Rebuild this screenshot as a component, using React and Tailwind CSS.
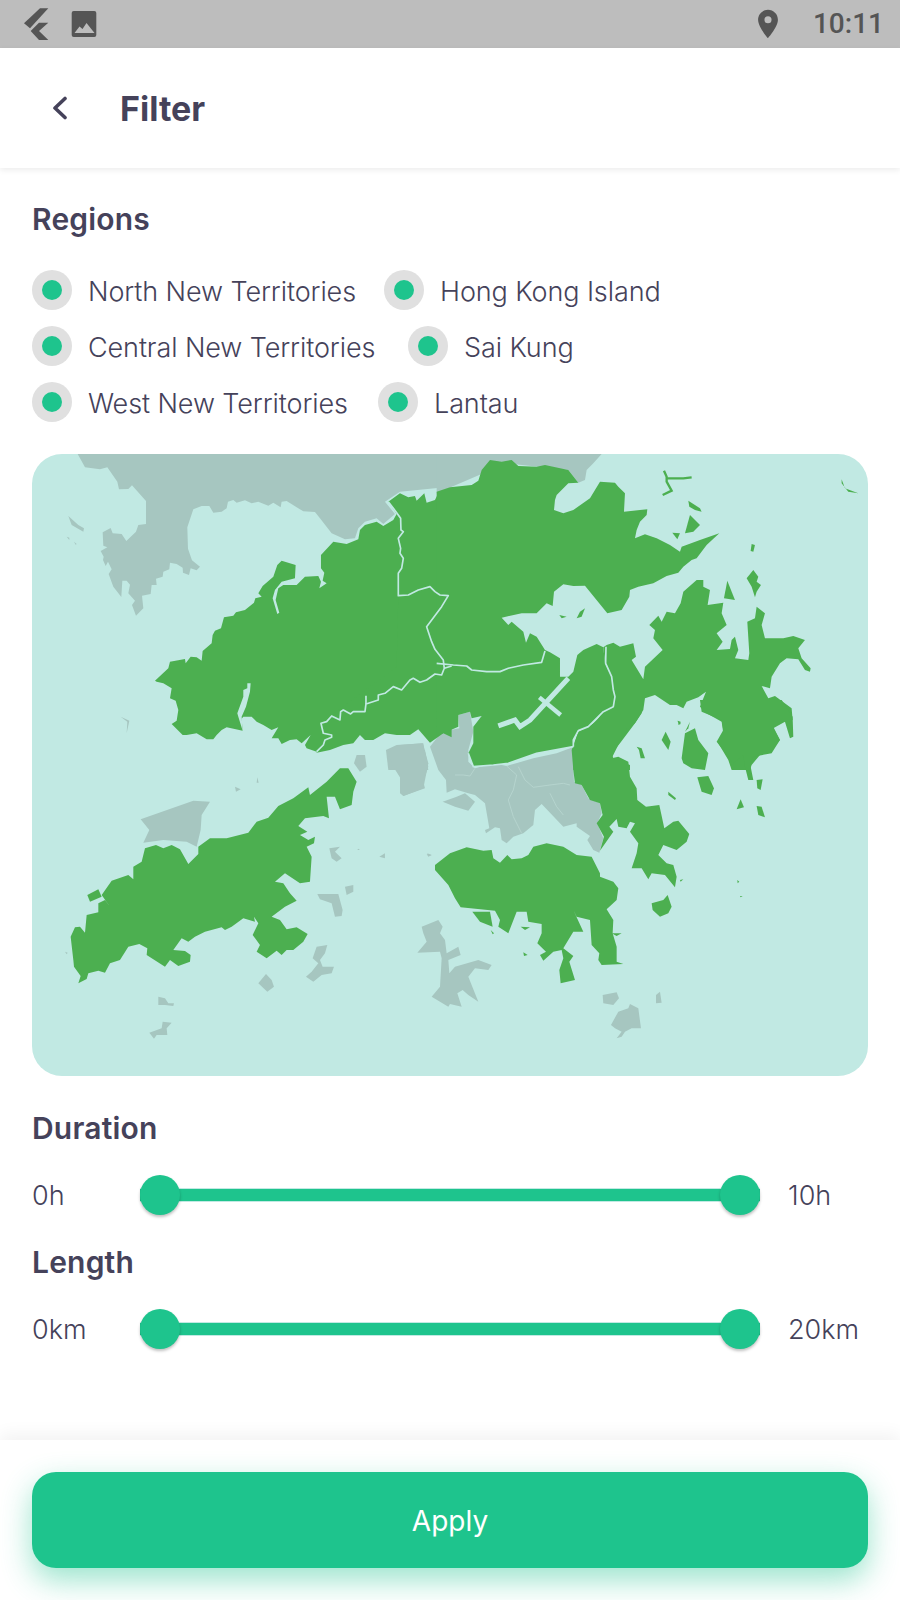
import { MdLocationOn } from 'react-icons/md';

const GREEN = '#4caf50';
const GREY = '#a6c6c0';
const SEA = '#c1e9e3';

// traced map pieces, each set in the pixel grid of the crop it was read from
const crops = [
  {
    at: 'translate(30 450) scale(0.3333)',
    grey: [
      '143,12 165,52 210,58 232,52 262,95 267,118 295,117 306,106 348,153 348,222 325,225 318,245 289,273 275,252 248,250 242,234 218,247 220,287 232,292 212,303 221,320 219,330 227,348 234,335 245,358 236,372 250,410 274,441 277,392 290,392 300,404 295,430 315,452 306,465 318,497 340,475 336,437 362,432 365,405 380,405 378,386 398,380 400,365 418,358 420,338 440,342 458,353 459,368 477,375 482,355 500,361 510,350 486,331 474,296 472,232 490,178 515,168 538,168 550,188 575,185 590,175 594,155 610,150 620,158 645,151 665,160 685,155 715,167 730,158 752,172 755,155 770,153 800,172 820,184 855,186 870,205 905,250 945,268 975,265 985,235 1005,215 1040,205 1060,222 1095,192 1065,155 1110,125 1260,110 1260,12',
      '115,198 145,225 162,235 160,245 125,225',
      '110,260 118,263 118,270',
      '132,275 140,282 137,284',
      '272,800 298,812 290,850 292,815',
      '1068,900 1100,885 1180,880 1195,960 1075,960',
    ],
    green: [
      '375,692 415,655 420,635 465,627 467,640 482,620 500,622 515,632 518,603 545,580 548,555 555,542 573,535 582,502 610,497 618,487 645,480 672,458 676,445 695,440 685,430 698,408 730,380 742,345 755,332 797,345 795,385 755,395 735,420 728,445 742,492 748,488 737,450 745,415 760,405 800,405 825,380 865,378 873,395 868,415 890,400 878,392 883,368 873,355 873,315 910,275 950,282 985,268 990,240 1005,225 1040,215 1060,228 1090,210 1100,192 1112,205 1113,240 1120,245 1105,265 1112,295 1110,310 1120,325 1115,355 1105,370 1105,437 1135,435 1165,420 1200,410 1215,425 1230,435 1255,437 1235,470 1190,530 1205,575 1215,598 1240,630 1243,655 1235,670 1215,672 1190,690 1170,697 1150,685 1140,690 1115,720 1090,710 1065,730 1045,735 1045,750 1012,760 1005,785 970,785 962,792 940,780 932,785 930,810 905,798 890,815 873,820 880,850 905,855 905,862 885,870 880,885 860,905 830,895 825,885 842,855 815,880 800,868 780,870 755,882 745,865 725,865 745,832 725,840 700,825 680,815 665,800 640,800 635,806 638,842 590,832 575,840 560,855 550,868 530,868 500,850 470,855 458,855 425,822 440,812 445,780 437,752 420,745 425,715 400,700 380,695',
      '1075,155 1110,130 1135,142 1155,138 1160,152 1183,130 1190,158 1215,150 1225,130 1245,120 1265,118 1265,862 1240,850 1200,878 1165,838 1140,855 1100,855 1065,850 1030,870 1005,870 990,855 970,880 940,885 900,900 860,908 860,905 880,885 885,870 905,862 905,855 880,850 873,820 1100,650 1105,437 1105,370 1115,355 1120,325 1110,310 1112,295 1105,265 1120,245 1113,240 1112,205 1100,192',
    ],
    sea: ['652,700 662,700 660,725 648,770 635,800 638,842 625,800 622,790 640,740 640,720 652,715'],
    lines: [
      '1075,155 1098,185 1112,205 1113,240 1120,245 1105,265 1112,295 1110,310 1120,325 1115,355 1105,370 1105,437 1135,435 1165,420 1200,410 1215,425 1230,435 1255,437 1235,470 1190,530 1205,575 1215,598 1240,630 1243,655 1235,675 1215,672 1190,690 1170,697 1150,685 1140,690 1115,720 1090,710 1065,730 1045,735 1045,750 1008,762 1005,785 970,785 962,792 940,780 932,785 930,810 905,798 890,815 873,820 880,850 905,855 905,862 885,870 880,885 860,905',
      '1008,737 1008,762',
      '1243,655 1265,648',
    ],
  },
  {
    at: 'translate(30 750) scale(0.3333)',
    grey: [
      '1070,0 1185,0 1195,50 1180,95 1185,115 1120,138 1110,120 1115,90 1090,50',
      '980,15 1005,15 1010,50 990,65 972,40',
      '332,208 490,152 540,155 515,195 512,240 500,290 470,275 400,270 340,278 358,240',
      '615,110 632,118 618,125',
      '682,82 686,98 680,98',
      '898,295 930,290 915,305 925,315 935,325 920,335 905,325',
      '985,296 990,300 982,300',
      '1048,320 1065,310 1065,325',
      '1192,310 1205,315 1195,318',
      '862,432 925,432 938,480 935,498 915,500 905,460 870,448',
      '945,410 970,405 970,425 950,435',
      '860,590 892,585 885,610 870,630 878,650 912,650 905,670 875,675 850,695 828,680 845,665 865,640 848,625',
      '685,700 708,672 725,690 732,710 712,725',
      '385,740 405,745 415,760 432,760 430,768 405,765 385,765',
      '358,848 395,835 398,815 425,818 410,835 412,855 380,855 372,866',
      '105,605 113,608 110,613',
    ],
    green: [
      '930,55 955,55 980,95 970,125 965,165 930,178 915,140 890,140 897,205 880,198 825,205 805,228 832,245 810,255 835,270 855,260 852,280 830,290 845,320 840,395 810,400 765,370 735,395 760,400 780,430 800,452 765,470 725,500 750,510 770,538 800,532 833,552 820,575 790,600 770,600 755,615 740,602 710,625 680,605 690,585 668,555 685,520 672,500 675,515 640,505 605,530 585,540 575,532 525,545 495,560 475,575 455,565 430,600 465,603 482,615 480,635 445,648 420,630 405,650 350,615 352,595 328,582 295,590 270,630 240,640 225,668 205,662 175,670 170,687 145,700 152,678 132,650 130,630 122,560 135,532 150,530 165,548 170,495 205,487 205,460 225,450 240,470 215,435 245,392 295,375 310,388 310,350 335,335 345,295 378,285 400,295 425,285 450,298 475,342 505,312 505,290 540,265 590,265 655,248 680,215 715,203 745,168 790,145 835,112 840,135 890,95',
      '172,435 205,418 215,440 180,455',
    ],
    sea: [],
    lines: [],
  },
  {
    at: 'translate(440 450) scale(0.3333)',
    grey: ['-10,12 485,12 460,40 440,60 435,90 415,98 385,60 200,40 -10,130'],
    green: [
      '-10,125 30,112 95,105 115,92 125,60 150,30 185,35 215,30 235,48 290,50 315,45 385,60 415,98 385,100 350,135 345,150 342,180 370,190 400,180 450,145 480,95 525,98 535,110 555,130 552,185 600,180 622,178 620,195 600,215 590,240 585,265 615,253 650,265 690,285 720,305 725,290 780,270 838,250 800,285 770,325 755,330 730,350 715,368 680,378 640,400 595,410 570,420 568,440 545,480 502,490 435,407 400,408 370,403 342,425 338,468 320,460 290,490 245,490 185,503 205,525 215,515 250,545 258,578 270,550 290,560 315,600 330,607 360,625 360,680 385,680 400,665 412,615 430,600 470,582 490,592 495,640 515,680 520,720 525,740 520,770 490,785 445,830 415,842 400,870 400,890 290,910 205,940 160,945 100,950 85,910 100,880 100,830 125,798 95,805 90,785 55,795 55,830 -10,858',
      '500,585 520,578 540,590 580,580 588,620 575,630 610,688 615,650 668,600 640,565 645,540 628,525 655,497 665,515 680,485 705,490 722,460 730,425 770,390 790,390 790,410 810,420 803,465 850,458 845,490 860,525 830,550 848,575 830,600 870,597 875,570 885,560 895,600 885,625 925,630 928,610 922,515 945,505 950,470 975,490 965,525 975,565 1030,565 1060,558 1095,570 1075,595 1085,625 1112,655 1110,665 1095,660 1075,628 1040,625 1020,640 995,680 990,715 965,708 985,745 1005,738 1055,775 1058,810 1030,815 1000,830 1020,870 990,905 960,915 935,945 930,960 875,960 865,930 835,880 850,850 845,815 800,790 780,770 798,725 775,742 740,755 730,775 710,765 690,765 645,735 615,745 610,780 585,820 540,880 515,910 520,925 570,945 570,960 400,960 395,900 415,845 445,835 490,790 520,770 525,740 520,720 515,680 495,640 490,592',
      '1205,88 1215,115 1255,130 1225,125 1205,100',
      '745,152 780,175 785,185 765,180 748,170',
      '750,195 780,225 760,245 735,250',
      '697,248 720,250 712,268',
      '935,282 945,285 940,305 932,303',
      '940,360 955,380 950,395 963,405 950,425 945,442 935,410 920,385',
      '862,392 885,450 852,445',
      '435,475 425,500 410,505 420,485',
      '358,495 380,500 365,505',
      '712,812 722,815 720,825',
      '750,815 735,845 745,835',
    ],
    sea: [],
    lines: [
      '-10,640 40,645 80,648 95,660 140,665 180,665 205,655 250,645 305,637 315,603',
      '498,590 497,640 515,680 520,720 525,740 520,770 490,785 445,830 415,842 400,870 400,890',
      '85,910 100,950 160,945 205,940 290,910 400,890',
    ],
    bridge: '385,685 270,810 240,830 225,810 175,828',
    cross: '298,742 362,795',
    strand: ['672,62 680,80 680,95 695,122 668,135', '680,85 730,85 755,82'],
  },
  {
    at: 'translate(400 700) scale(0.3333)',
    grey: [
      '90,140 125,95 178,85 175,45 210,35 220,95 205,150 205,185 225,205 280,190 320,198 400,175 470,160 518,142 522,245 545,255 565,295 600,310 605,340 592,370 610,415 598,458 580,450 562,420 570,408 530,380 530,370 490,380 425,312 405,330 400,375 370,400 340,410 320,430 305,420 300,385 285,382 258,400 255,390 268,385 255,310 225,285 205,280 165,268 140,278 138,240 115,210',
      '128,305 170,290 195,280 225,305 205,332 165,320',
      '0,135 68,130 85,190 70,265 10,288 0,280',
      '65,680 115,660 128,680 120,700 135,720 140,760 175,740 182,765 145,780 148,820 165,800 235,780 275,795 265,810 225,805 205,830 235,905 205,885 188,870 172,880 185,920 150,912 145,920 95,890 120,860 125,775 120,755 52,758 80,725 70,700',
      '608,885 650,877 657,895 640,915 610,910',
      '768,885 780,875 785,908 768,910',
      '633,975 655,935 685,925 690,912 715,925 723,985 695,985 675,995 665,1010 650,1015 665,995 645,985',
      '80,462 95,465 85,470',
    ],
    green: [
      '520,142 535,95 590,65 610,30 640,15 640,0 730,0 725,40 705,70 680,87 650,145 635,175 655,170 685,185 690,230 710,265 712,300 738,320 778,315 793,385 820,365 835,362 868,402 860,425 830,450 790,435 775,465 800,490 820,495 830,530 825,562 795,525 755,520 745,538 725,505 695,505 710,460 715,430 690,395 705,370 690,365 680,385 655,380 650,357 628,380 640,395 600,452 612,410 590,370 608,345 600,310 570,300 545,255 525,250 520,210',
      '105,495 150,460 200,442 250,452 275,450 280,475 300,488 322,465 335,478 365,475 385,465 400,440 440,430 490,440 530,465 575,470 600,520 600,530 640,545 655,565 650,600 620,628 640,660 638,700 650,740 650,785 670,792 605,795 595,780 598,760 575,735 570,660 530,650 520,630 550,695 520,695 490,745 520,768 508,785 525,840 482,850 478,810 490,775 485,750 460,755 430,782 420,765 438,755 412,730 425,700 425,672 385,665 380,635 350,635 325,700 295,680 300,660 285,632 182,622 165,595 145,555 105,510',
      '217,635 270,635 278,680 240,665',
      '272,690 282,700 278,703',
      '362,680 390,682 375,690',
      '370,757 383,765 372,768',
      '635,700 665,700 650,708',
      '805,275 828,295 825,300 805,285',
      '892,232 925,228 942,265 935,285 905,275',
      '845,175 855,100 885,85 895,120 925,160 915,210 875,205 850,190',
      '785,120 797,95 812,125 805,150',
      '755,610 790,600 803,585 815,620 805,640 780,650 758,630',
      '900,0 1145,0 1178,50 1180,110 1170,115 1155,65 1120,85 1140,120 1115,160 1060,170 1050,190 1060,240 1045,240 1035,200 1030,165 1000,190 985,170 950,125 970,90 965,60 905,35',
      '1070,240 1088,238 1082,270 1072,265',
      '1022,298 1032,322 1010,328',
      '1070,318 1085,320 1095,352 1075,345',
      '710,140 725,145 735,175 722,175 717,150',
      '835,62 842,70 835,75',
      '1012,540 1018,545 1013,550',
      '1020,588 1028,588 1022,592',
      '840,540 850,538 842,545',
    ],
    sea: [],
    lines: [],
    seams: [
      '320,198 350,225 340,270 325,300 340,350 365,400',
      '355,200 375,240 400,262 450,255 490,250 510,255',
      '165,225 190,225 210,228 225,205',
      '450,280 470,320 490,345',
    ],
  },
];

function HongKongMap() {
  return (
    <svg viewBox="32 454 836 622" className="block w-full h-full">
      {crops.map((c) => (
        <g key={c.at} transform={c.at}>
          {c.grey.map((p) => <polygon key={p} points={p} fill={GREY} />)}
        </g>
      ))}
      {crops.map((c) => (
        <g key={c.at} transform={c.at}>
          {c.green.map((p) => <polygon key={p} points={p} fill={GREEN} />)}
          {c.strand && c.strand.map((p) => (
            <polyline key={p} points={p} fill="none" stroke={GREEN} strokeWidth="7" />
          ))}
        </g>
      ))}
      {/* borders and water go on top so one crop's land can't cover them */}
      {crops.map((c) => (
        <g key={c.at} transform={c.at}>
          {c.sea.map((p) => <polygon key={p} points={p} fill={SEA} />)}
          {c.lines.map((p) => (
            <polyline key={p} points={p} fill="none" stroke={SEA} strokeWidth="5" strokeLinejoin="round" />
          ))}
          {c.seams && c.seams.map((p) => (
            <polyline key={p} points={p} fill="none" stroke="#b8d6d0" strokeWidth="2.5" />
          ))}
          {c.bridge && <polyline points={c.bridge} fill="none" stroke={SEA} strokeWidth="15" />}
          {c.cross && <polyline points={c.cross} fill="none" stroke={SEA} strokeWidth="13" />}
        </g>
      ))}
    </svg>
  );
}

function FlutterLogo() {
  return (
    <svg viewBox="0 0 26 32" className="w-[26px] h-8" fill="#555555">
      <polygon points="17,0.3 25.3,0.3 7,20.3 1,15.3" />
      <polygon points="16,14.7 25.3,14.7 16,23 25.3,32 16,32 7.7,23" />
    </svg>
  );
}

function ImageIcon() {
  return (
    <svg viewBox="0 0 26 26" className="w-[26px] h-[26px]">
      <rect x="0.7" y="0" width="24.6" height="26" rx="2" fill="#555555" />
      <polygon points="3.5,22 23.5,22 15.5,12 11.5,18 8.5,15.5" fill="#bdbdbd" />
    </svg>
  );
}

function Region({ label, width = '' }) {
  return (
    <div className={`flex items-center gap-4 ${width}`}>
      <div className="w-10 h-10 rounded-full bg-[#e0e0e0] flex items-center justify-center">
        <div className="w-5 h-5 rounded-full bg-[#1ec48d]" />
      </div>
      <span className="h-10 text-[27px] leading-[44px] font-light tracking-[-0.1px] text-[#45425a]">{label}</span>
    </div>
  );
}

function RangeRow({ from, to }) {
  return (
    <div className="flex items-center h-10">
      <span className="w-[108px] h-10 text-[27px] leading-[42px] font-light text-[#45425a]">{from}</span>
      <div className="relative w-[620px] h-10 flex items-center">
        <div className="w-full h-[14px] bg-[#c1e9e3] flex items-center">
          <div className="w-full h-3 bg-[#1ec48d]" />
        </div>
        <div className="absolute left-0 top-0 w-10 h-10 rounded-full bg-[#1ec48d] shadow-[0_2px_3px_rgba(0,0,0,0.25)]" />
        <div className="absolute right-0 top-0 w-10 h-10 rounded-full bg-[#1ec48d] shadow-[0_2px_3px_rgba(0,0,0,0.25)]" />
      </div>
      <span className="ml-7 h-10 text-[27px] leading-[42px] font-light text-[#45425a]">{to}</span>
    </div>
  );
}

export default function App() {
  return (
    <div className="w-[900px] h-[1600px] flex flex-col bg-white font-['Inter',sans-serif]">
      {/* Status bar */}
      <div className="h-12 shrink-0 bg-[#bdbdbd] flex items-center pl-[23px] pr-4">
        <FlutterLogo />
        <div className="ml-[22px]"><ImageIcon /></div>
        <MdLocationOn className="ml-auto text-[34px] text-[#555555]" />
        <span className="ml-7 font-['Roboto',sans-serif] font-medium text-[28px] text-[#555555]">10:11</span>
      </div>

      {/* App bar */}
      <div className="h-[120px] shrink-0 flex items-center bg-white shadow-[0_2px_6px_rgba(0,0,0,0.08)] z-10">
        <svg viewBox="0 0 16 24" className="ml-[52px] w-4 h-6" fill="none" stroke="#45425a" strokeWidth="3.6" strokeLinecap="round" strokeLinejoin="round">
          <polyline points="13,2.5 3,12 13,21.5" />
        </svg>
        <h1 className="ml-[52px] text-[34px] font-bold text-[#45425a]">Filter</h1>
      </div>

      {/* Body */}
      <div className="flex-1 px-8">
        <h2 className="mt-[33px] text-[30px] leading-9 font-semibold tracking-[0.2px] text-[#45425a]">Regions</h2>
        <div className="mt-[33px] flex flex-col gap-4">
          <div className="flex">
            <Region label="North New Territories" width="w-[352px]" />
            <Region label="Hong Kong Island" />
          </div>
          <div className="flex">
            <Region label="Central New Territories" width="w-[376px]" />
            <Region label="Sai Kung" />
          </div>
          <div className="flex">
            <Region label="West New Territories" width="w-[346px]" />
            <Region label="Lantau" />
          </div>
        </div>

        <div className="mt-8 w-[836px] h-[622px] rounded-[30px] overflow-hidden bg-[#c1e9e3]">
          <HongKongMap />
        </div>

        <h2 className="mt-[34px] text-[30px] leading-9 font-semibold tracking-[0.2px] text-[#45425a]">Duration</h2>
        <div className="mt-[29px]">
          <RangeRow from="0h" to="10h" />
        </div>
        <h2 className="mt-[29px] text-[30px] leading-9 font-semibold tracking-[0.2px] text-[#45425a]">Length</h2>
        <div className="mt-[29px]">
          <RangeRow from="0km" to="20km" />
        </div>
      </div>

      {/* Footer */}
      <div className="h-40 shrink-0 bg-white px-8 pt-8 shadow-[0_-6px_16px_rgba(0,0,0,0.05)]">
        <button className="w-full h-24 rounded-3xl bg-[#1ec48d] text-white text-[28px] leading-[98px] font-normal shadow-[0_12px_30px_rgba(30,196,141,0.45)]">
          Apply
        </button>
      </div>
    </div>
  );
}
